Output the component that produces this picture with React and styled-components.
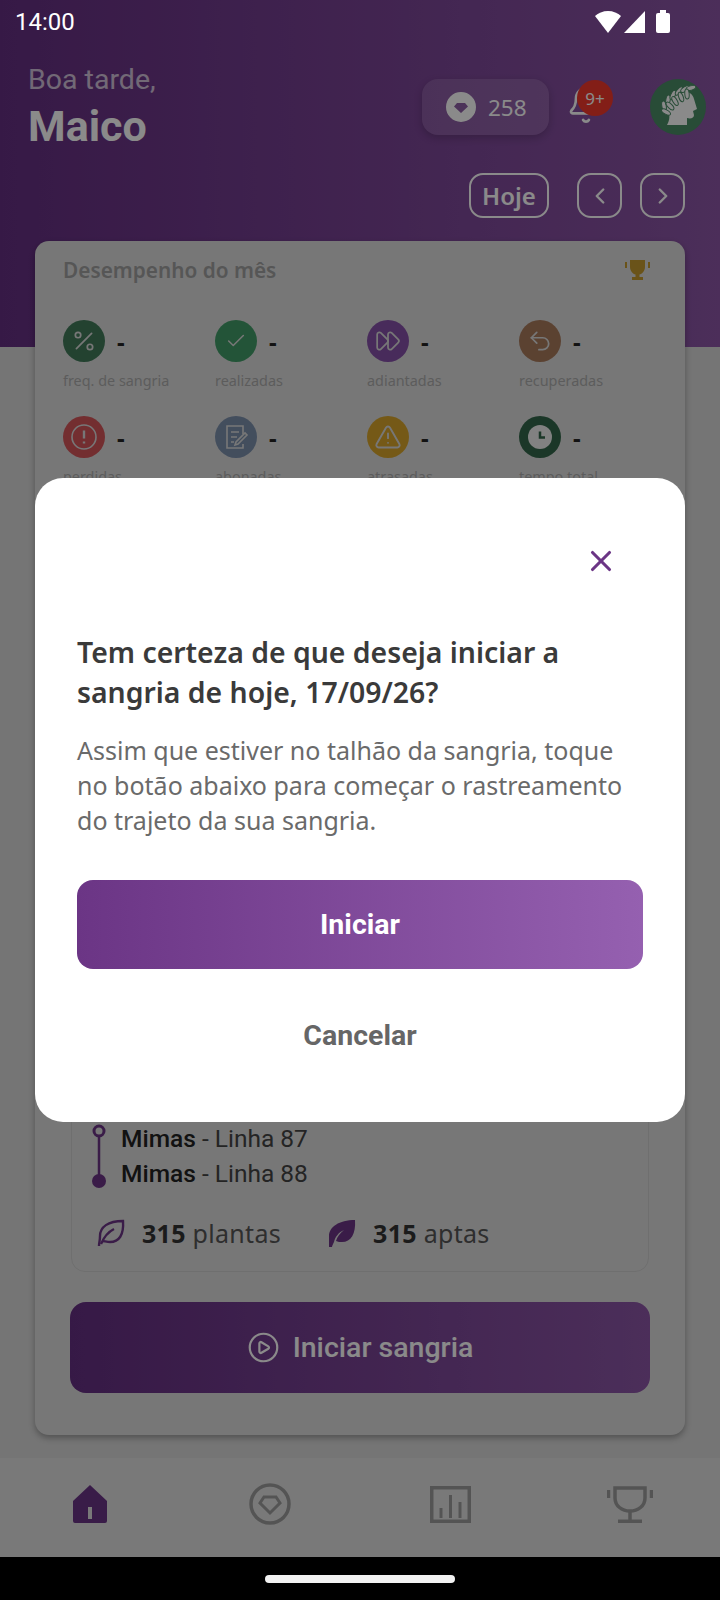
import React from "react";
import styled, { createGlobalStyle } from "styled-components";
import {
  Bell,
  Check,
  ChevronLeft,
  ChevronRight,
  CirclePlay,
  FastForward,
  Percent,
  TriangleAlert,
  Undo2,
  X,
} from "lucide-react";

const GlobalStyle = createGlobalStyle`
  html, body {
    margin: 0;
    padding: 0;
    background: #000;
  }
  * {
    box-sizing: border-box;
  }
`;

const SANS = `"Noto Sans", "Open Sans", sans-serif`;
const ROBOTO = `"Roboto", "Liberation Sans", sans-serif`;

const DiamondCutIcon = ({ size = 30 }) => (
  <svg width={size} height={size} viewBox="0 0 30 30">
    <path
      fill="#fff"
      fillRule="evenodd"
      d="M15 0a15 15 0 1 0 0 30a15 15 0 1 0 0-30zM11 11h8l3 3.500-7 6.500-7-6.500z"
    />
  </svg>
);

const LAUREL = [
  [14, 27, -100],
  [18, 21, -80],
  [23, 16, -65],
  [29, 12, -50],
  [35, 10, -35],
  [41, 9, -15],
  [16, 33, -150],
  [20, 27, -135],
  [25, 22, -120],
  [31, 18, -110],
  [37, 15, -95],
];

const LaurelHead = () => (
  <svg width="56" height="56" viewBox="0 0 56 56">
    <path
      fill="#fff"
      d="M22 15C30 10 42 11 44 20L47 30L43 32L44 36C44 39 41 40 37 39L37 46L17 46C19 42 20 39 19 35C15 30 16 20 22 15z"
    />
    {LAUREL.map(([x, y, r]) => (
      <ellipse
        key={`${x}-${y}`}
        cx={x}
        cy={y}
        rx="5"
        ry="2.200"
        fill="#fff"
        stroke="#4a8c66"
        strokeWidth="1"
        transform={`rotate(${r} ${x} ${y})`}
      />
    ))}
  </svg>
);

const TrophySolid = () => (
  <svg width="27" height="21" viewBox="0 0 27 21">
    <path fill="#c59a2f" d="M6 0h15v7c0 4-3 7-5.500 7.500V17H19v3H8v-3h3.500v-2.500C9 14 6 11 6 7z" />
    <rect fill="#c59a2f" x="1" y="2" width="2" height="6" />
    <rect fill="#c59a2f" x="24" y="2" width="2" height="6" />
  </svg>
);

const ClockSolid = () => (
  <svg width="24" height="24" viewBox="0 0 24 24">
    <circle cx="12" cy="12" r="12" fill="#eee" />
    <path d="M12 6.500v6h5" fill="none" stroke="#33664a" strokeWidth="2.500" />
  </svg>
);

const AlertCircleIcon = () => (
  <svg width="28" height="28" viewBox="0 0 28 28" fill="none" stroke="#ddd" strokeWidth="1.600">
    <circle cx="14" cy="14" r="12" />
    <path d="M14 7.500v8M14 18.500v2" strokeWidth="2.400" />
  </svg>
);

const NoteIcon = () => (
  <svg width="28" height="28" viewBox="0 0 28 28" fill="none" stroke="#ddd" strokeWidth="1.600">
    <path d="M21 11V3H5v22h16v-4" />
    <path d="M9 9h8M9 14h6M9 19h3" />
    <path d="M13 22l1-3 9-9 2 2-9 9z" />
  </svg>
);

const RouteIcon = () => (
  <svg width="14" height="64" viewBox="0 0 14 64">
    <circle cx="7" cy="7" r="5" fill="none" stroke="#6b3585" strokeWidth="3" />
    <path d="M7 12v46" stroke="#6b3585" strokeWidth="2.500" />
    <circle cx="7" cy="57" r="7" fill="#6b3585" />
  </svg>
);

const LeafOutline = () => (
  <svg width="28" height="28" viewBox="0 0 28 28" fill="none" stroke="#6b3585" strokeWidth="2.400">
    <path d="M2 27c0-3 1-5 1-10C3 8 11 2 26 2c1 14-4 21-13 21-3 0-6-1-8-1" />
    <path d="M4 25C7 18 11 13 17 10" />
  </svg>
);

const LeafSolid = () => (
  <svg width="28" height="28" viewBox="0 0 28 28">
    <path
      fill="#6b3585"
      d="M1 28c0-4 0-7 0-11C1 8 11 1 27 1c1 14-4 22-13 22-2 0-4 0-6-1 1-4 4-8 8-11-5 2-9 7-10 12-1 2-2 4-2 5z"
    />
  </svg>
);

const HomeIcon = () => (
  <svg width="38" height="38" viewBox="0 0 38 38">
    <path
      fill="#6a3586"
      fillRule="evenodd"
      d="M19 0l17 16v20a2 2 0 0 1-2 2H4a2 2 0 0 1-2-2V16zM17 22v12h4V22z"
    />
  </svg>
);

const GemNavIcon = () => (
  <svg width="42" height="42" viewBox="0 0 42 42" fill="none" stroke="#9c9c9c" strokeWidth="3.500">
    <circle cx="21" cy="21" r="19" />
    <path d="M15 14h12l4 6-10 10-10-10z" strokeWidth="3" />
  </svg>
);

const ChartNavIcon = () => (
  <svg width="41" height="37" viewBox="0 0 41 37" fill="none" stroke="#9c9c9c" strokeWidth="3.500">
    <rect x="1.750" y="1.750" width="37.500" height="33.500" />
    <path d="M11 32V22M20.500 32V9M30 32V16" strokeWidth="3" />
  </svg>
);

const TrophyNavIcon = () => (
  <svg width="46" height="37" viewBox="0 0 46 37" fill="none" stroke="#9c9c9c" strokeWidth="3.500">
    <path d="M8 2h30v10c0 8-7 13-15 13S8 20 8 12z" />
    <path d="M23 25v9M11 35.250h24" />
    <path d="M1.500 4v8M44.500 4v8" />
  </svg>
);

const STATS = [
  { label: "freq. de sangria", color: "#417a5a", icon: <Percent size={26} color="#ddd" strokeWidth={1.600} /> },
  { label: "realizadas", color: "#429c68", icon: <Check size={22} color="#ddd" strokeWidth={1.600} /> },
  { label: "adiantadas", color: "#8550a8", icon: <FastForward size={26} color="#ddd" strokeWidth={1.600} /> },
  { label: "recuperadas", color: "#a87a5c", icon: <Undo2 size={26} color="#ddd" strokeWidth={1.600} /> },
  { label: "perdidas", color: "#d4555a", icon: <AlertCircleIcon /> },
  { label: "abonadas", color: "#7c90ad", icon: <NoteIcon /> },
  { label: "atrasadas", color: "#d8a52c", icon: <TriangleAlert size={28} color="#ddd" strokeWidth={1.600} /> },
  { label: "tempo total", color: "#33664a", icon: <ClockSolid /> },
];

export default function App() {
  return (
    <>
      <GlobalStyle />
      <Screen>
        <Header>
          <StatusBar>
            <Clock>14:00</Clock>
            <StatusIcons>
              <svg width="26" height="22" viewBox="0 0 26 22">
                <path fill="#fff" d="M0 5C3 2 8 0 13 0s10 2 13 5L13 22z" />
              </svg>
              <svg width="21" height="22" viewBox="0 0 21 22">
                <path fill="#fff" d="M21 0v22H0z" />
              </svg>
              <BatteryIcon />
            </StatusIcons>
          </StatusBar>

          <TopRow>
            <Greeting>
              <Hello>Boa tarde,</Hello>
              <UserName>Maico</UserName>
            </Greeting>
            <TopRight>
              <PointsPill>
                <DiamondCutIcon />
                <PointsValue>258</PointsValue>
              </PointsPill>
              <BellBox>
                <Bell size={40} color="#fff" strokeWidth={1.600} />
                <BellBadge>9+</BellBadge>
              </BellBox>
              <Avatar>
                <LaurelHead />
              </Avatar>
            </TopRight>
          </TopRow>

          <DateActions>
            <TodayButton>Hoje</TodayButton>
            <ArrowGroup>
              <ArrowButton>
                <ChevronLeft size={26} color="#fff" strokeWidth={2.200} />
              </ArrowButton>
              <ArrowButton>
                <ChevronRight size={26} color="#fff" strokeWidth={2.200} />
              </ArrowButton>
            </ArrowGroup>
          </DateActions>
        </Header>

        <Content>
          <MonthCard>
            <CardTitleRow>
              <CardTitle>Desempenho do mês</CardTitle>
              <TrophySolid />
            </CardTitleRow>
            <StatsGrid>
              {STATS.map((stat) => (
                <Stat key={stat.label}>
                  <StatTop>
                    <StatCircle $color={stat.color}>{stat.icon}</StatCircle>
                    <StatValue>-</StatValue>
                  </StatTop>
                  <StatLabel>{stat.label}</StatLabel>
                </Stat>
              ))}
            </StatsGrid>

            <TaskCard>
              <RouteRow>
                <RouteIcon />
                <RouteLines>
                  <RouteLine>
                    <strong>Mimas</strong> - Linha 87
                  </RouteLine>
                  <RouteLine>
                    <strong>Mimas</strong> - Linha 88
                  </RouteLine>
                </RouteLines>
              </RouteRow>
              <PlantRow>
                <PlantItem>
                  <LeafOutline />
                  <PlantText>
                    <strong>315</strong> plantas
                  </PlantText>
                </PlantItem>
                <PlantItem>
                  <LeafSolid />
                  <PlantText>
                    <strong>315</strong> aptas
                  </PlantText>
                </PlantItem>
              </PlantRow>
            </TaskCard>

            <StartButton>
              <CirclePlay size={33} color="#fff" strokeWidth={1.600} />
              Iniciar sangria
            </StartButton>
          </MonthCard>
        </Content>

        <BottomNav>
          <NavItem>
            <HomeIcon />
          </NavItem>
          <NavItem>
            <GemNavIcon />
          </NavItem>
          <NavItem>
            <ChartNavIcon />
          </NavItem>
          <NavItem>
            <TrophyNavIcon />
          </NavItem>
        </BottomNav>

        <SystemBar>
          <HomeIndicator />
        </SystemBar>

        <Overlay>
          <Modal>
            <CloseRow>
              <X size={34} color="#6b3585" strokeWidth={2.200} />
            </CloseRow>
            <ModalTitle>
              Tem certeza de que deseja iniciar a sangria de hoje, 17/09/26?
            </ModalTitle>
            <ModalText>
              Assim que estiver no talhão da sangria, toque no botão abaixo para
              começar o rastreamento do trajeto da sua sangria.
            </ModalText>
            <ConfirmButton>Iniciar</ConfirmButton>
            <CancelButton>Cancelar</CancelButton>
          </Modal>
        </Overlay>
      </Screen>
    </>
  );
}

const Screen = styled.div`
  position: relative;
  width: 720px;
  height: 1600px;
  overflow: hidden;
  display: flex;
  flex-direction: column;
  background: #d8d8d8;
`;
const Header = styled.header`
  height: 347px;
  flex-shrink: 0;
  background: linear-gradient(90deg, #652f82, #8c56a6);
`;
const StatusBar = styled.div`
  position: relative;
  z-index: 20;
  height: 44px;
  padding: 0 50px 0 15px;
  display: flex;
  align-items: center;
  justify-content: space-between;
`;
const Clock = styled.span`
  font-family: ${ROBOTO};
  font-size: 24px;
  color: #fff;
`;
const StatusIcons = styled.div`
  display: flex;
  align-items: center;
  gap: 3px;
`;
const BatteryIcon = styled.span`
  position: relative;
  width: 14px;
  height: 20px;
  margin-left: 8px;
  margin-top: 2px;
  background: #fff;
  border-radius: 2px;

  &:before {
    content: "";
    position: absolute;
    top: -3px;
    left: 4px;
    width: 6px;
    height: 3px;
    background: #fff;
  }
`;
const TopRow = styled.div`
  margin-top: 18px;
  padding: 0 14px 0 28px;
  display: flex;
  justify-content: space-between;
`;
const Greeting = styled.div`
  display: flex;
  flex-direction: column;
`;
const Hello = styled.span`
  font-family: ${ROBOTO};
  font-weight: 400;
  font-size: 28.500px;
  line-height: 36px;
  color: #fff;
  opacity: 0.7;
`;
const UserName = styled.span`
  font-family: ${ROBOTO};
  font-weight: 700;
  font-size: 43px;
  line-height: 56px;
  color: #fff;
`;
const TopRight = styled.div`
  margin-top: 17px;
  display: flex;
  align-items: flex-start;
`;
const PointsPill = styled.div`
  width: 127px;
  height: 56px;
  padding-left: 24px;
  display: flex;
  align-items: center;
  gap: 12px;
  border-radius: 16px;
  background: rgba(255, 255, 255, 0.12);
  box-shadow: 0 3px 8px rgba(0, 0, 0, 0.2);
`;
const PointsValue = styled.span`
  font-family: ${SANS};
  font-size: 22.500px;
  color: #fff;
`;
const BellBox = styled.div`
  position: relative;
  width: 46px;
  height: 56px;
  margin: 0 38px 0 17px;
  padding-top: 6px;
`;
const BellBadge = styled.span`
  position: absolute;
  top: 1px;
  right: -1px;
  width: 36px;
  height: 36px;
  display: flex;
  align-items: center;
  justify-content: center;
  border-radius: 50%;
  background: #f2382c;
  font-family: ${SANS};
  font-size: 17px;
  color: #fff;
`;
const Avatar = styled.div`
  width: 56px;
  height: 56px;
  border-radius: 50%;
  background: #4a8c66;
  overflow: hidden;
`;
const DateActions = styled.div`
  margin-top: 19px;
  padding-right: 35px;
  display: flex;
  justify-content: flex-end;
  gap: 28px;
`;
const TodayButton = styled.div`
  width: 80px;
  height: 45px;
  display: flex;
  align-items: center;
  justify-content: center;
  border: 2px solid #fff;
  border-radius: 14px;
  font-family: ${SANS};
  font-weight: 600;
  font-size: 24px;
  color: #fff;
`;
const ArrowGroup = styled.div`
  display: flex;
  gap: 18px;
`;
const ArrowButton = styled.div`
  width: 45px;
  height: 45px;
  display: flex;
  align-items: center;
  justify-content: center;
  border: 2px solid #fff;
  border-radius: 14px;
`;
const Content = styled.main`
  flex: 1;
  padding: 0 35px 23px;
  display: flex;
  flex-direction: column;
`;
const MonthCard = styled.section`
  flex: 1;
  margin-top: -106px;
  padding: 0 28px 42px;
  display: flex;
  flex-direction: column;
  border-radius: 14px;
  background: #dcdcdc;
  box-shadow: 0 3px 6px rgba(0, 0, 0, 0.3);
`;
const CardTitleRow = styled.div`
  height: 58px;
  padding: 0 6px 0 0;
  display: flex;
  align-items: center;
  justify-content: space-between;
`;
const CardTitle = styled.h2`
  margin: 0;
  font-family: ${SANS};
  font-weight: 600;
  font-size: 20.800px;
  color: #a0a0a0;
`;
const StatsGrid = styled.div`
  margin-top: 21px;
  display: grid;
  grid-template-columns: repeat(4, 152px);
  row-gap: 25px;
`;
const Stat = styled.div`
  display: flex;
  flex-direction: column;
  gap: 9px;
`;
const StatTop = styled.div`
  display: flex;
  align-items: center;
  gap: 12px;
`;
const StatCircle = styled.div`
  width: 42px;
  height: 42px;
  display: flex;
  align-items: center;
  justify-content: center;
  border-radius: 50%;
  background: ${(props) => props.$color};
`;
const StatValue = styled.span`
  font-family: ${SANS};
  font-weight: 700;
  font-size: 24px;
  color: #222;
`;
const StatLabel = styled.span`
  font-family: ${SANS};
  font-size: 14.400px;
  line-height: 20px;
  color: #ababab;
`;
const TaskCard = styled.div`
  margin: auto 8px 0;
  padding: 12px 20px 21px;
  display: flex;
  flex-direction: column;
  gap: 25px;
  border: 1px solid #cdcdcd;
  border-radius: 14px;
`;
const RouteRow = styled.div`
  display: flex;
  align-items: center;
  gap: 15px;
`;
const RouteLines = styled.div`
  display: flex;
  flex-direction: column;
`;
const RouteLine = styled.span`
  font-family: ${ROBOTO};
  font-size: 24.500px;
  line-height: 35px;
  color: #444;

  strong {
    font-weight: 500;
    color: #222;
  }
`;
const PlantRow = styled.div`
  padding-left: 5px;
  display: flex;
  gap: 47px;
`;
const PlantItem = styled.div`
  display: flex;
  align-items: center;
  gap: 17px;
`;
const PlantText = styled.span`
  font-family: ${SANS};
  font-size: 25px;
  letter-spacing: 0.300px;
  color: #555;

  strong {
    font-weight: 700;
    color: #333;
  }
`;
const StartButton = styled.div`
  height: 91px;
  margin: 30px 7px 0;
  display: flex;
  align-items: center;
  justify-content: center;
  gap: 13px;
  border-radius: 16px;
  background: linear-gradient(90deg, #652f82, #8c56a6);
  font-family: ${ROBOTO};
  font-weight: 500;
  font-size: 28.500px;
  color: #fff;
`;
const BottomNav = styled.nav`
  height: 99px;
  flex-shrink: 0;
  padding-bottom: 7px;
  display: grid;
  grid-template-columns: repeat(4, 180px);
  background: #e0e0e0;
`;
const NavItem = styled.div`
  display: flex;
  align-items: center;
  justify-content: center;
`;
const SystemBar = styled.div`
  position: relative;
  z-index: 20;
  height: 43px;
  flex-shrink: 0;
  display: flex;
  align-items: center;
  justify-content: center;
  background: #000;
`;
const HomeIndicator = styled.span`
  width: 190px;
  height: 8px;
  border-radius: 4px;
  background: #f2f2f2;
`;
const Overlay = styled.div`
  position: absolute;
  inset: 0;
  z-index: 10;
  display: flex;
  align-items: center;
  justify-content: center;
  background: rgba(0, 0, 0, 0.46);
`;
const Modal = styled.div`
  width: 650px;
  height: 644px;
  padding: 0 42px;
  display: flex;
  flex-direction: column;
  border-radius: 28px;
  background: #fff;
`;
const CloseRow = styled.div`
  height: 154px;
  padding: 66px 25px 0 0;
  display: flex;
  justify-content: flex-end;
  align-items: flex-start;
`;
const ModalTitle = styled.h2`
  margin: 0;
  font-family: ${SANS};
  font-weight: 600;
  font-size: 28.400px;
  line-height: 40px;
  color: #3a3a3a;
`;
const ModalText = styled.p`
  margin: 21px 0 0;
  font-family: ${SANS};
  font-weight: 400;
  font-size: 25px;
  line-height: 35px;
  color: #6a6a6a;
`;
const ConfirmButton = styled.div`
  height: 89px;
  margin-top: 42px;
  display: flex;
  align-items: center;
  justify-content: center;
  border-radius: 16px;
  background: linear-gradient(90deg, #6b3585, #9560b0);
  font-family: ${ROBOTO};
  font-weight: 700;
  font-size: 28.500px;
  color: #fff;
`;
const CancelButton = styled.div`
  margin-top: 45px;
  text-align: center;
  font-family: ${ROBOTO};
  font-weight: 700;
  font-size: 28.500px;
  line-height: 44px;
  color: #666;
`;
